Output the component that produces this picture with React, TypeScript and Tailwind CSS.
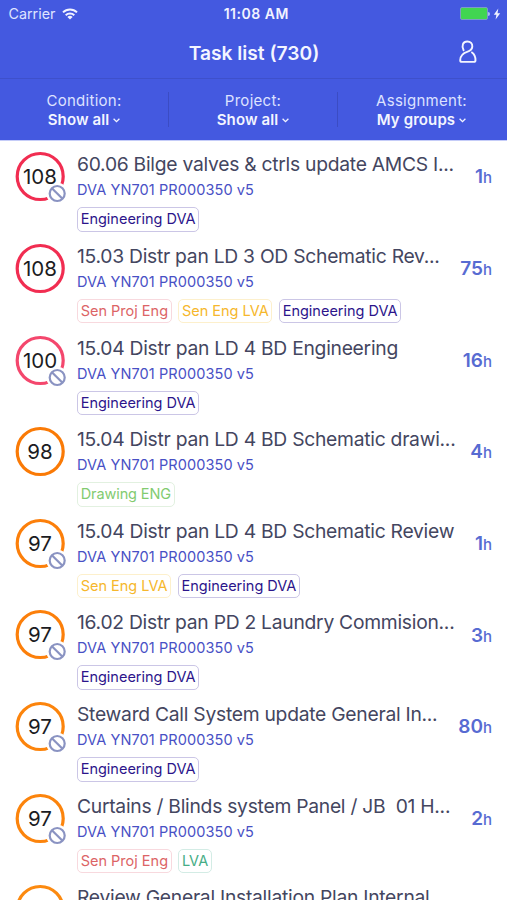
type Tag = 'proj' | 'lva' | 'dva' | 'draw' | 'teal';

const TAGS: Record<Tag, { label: string; cls: string }> = {
  dva: { label: 'Engineering DVA', cls: 'text-[#2c158b] border-[#cbc6e6]' },
  proj: { label: 'Sen Proj Eng', cls: 'text-[#dc6466] border-[#f8d9de]' },
  lva: { label: 'Sen Eng LVA', cls: 'text-[#f6b72c] border-[#fdf0cc]' },
  draw: { label: 'Drawing ENG', cls: 'text-[#82cb70] border-[#e2f1e0] tracking-[-0.1px]' },
  teal: { label: 'LVA', cls: 'text-[#46ad86] border-[#d3ece5]' },
};

type Task = {
  score: number;
  color: string;
  blocked?: boolean;
  title: string;
  hours: string;
  tags: Tag[];
};

const TASKS: Task[] = [
  { score: 108, color: '#f12d51', blocked: true, title: '60.06 Bilge valves & ctrls update AMCS I...', hours: '1', tags: ['dva'] },
  { score: 108, color: '#f12d51', title: '15.03 Distr pan LD 3 OD Schematic Rev...', hours: '75', tags: ['proj', 'lva', 'dva'] },
  { score: 100, color: '#f4476d', blocked: true, title: '15.04 Distr pan LD 4 BD Engineering', hours: '16', tags: ['dva'] },
  { score: 98, color: '#fa7a06', title: '15.04 Distr pan LD 4 BD Schematic drawi...', hours: '4', tags: ['draw'] },
  { score: 97, color: '#fc7f0a', blocked: true, title: '15.04 Distr pan LD 4 BD Schematic Review', hours: '1', tags: ['lva', 'dva'] },
  { score: 97, color: '#fc7f0a', blocked: true, title: '16.02 Distr pan PD 2 Laundry Commision...', hours: '3', tags: ['dva'] },
  { score: 97, color: '#fc840c', blocked: true, title: 'Steward Call System update General In...', hours: '80', tags: ['dva'] },
  { score: 97, color: '#fc840c', blocked: true, title: 'Curtains / Blinds system Panel / JB  01 H...', hours: '2', tags: ['proj', 'teal'] },
  { score: 97, color: '#fc8a10', title: 'Review General Installation Plan Internal', hours: '', tags: [] },
];

const FILTERS = [
  { label: 'Condition:', value: 'Show all' },
  { label: 'Project:', value: 'Show all' },
  { label: 'Assignment:', value: 'My groups' },
];

function StatusBar() {
  return (
    <div className="grid h-[27px] grid-cols-3 items-center pl-[8.5px] pr-[6px] text-[#f1f3ff]">
      <div className="flex items-center gap-[6.5px]">
        <span className="text-[14.3px] leading-[27px] text-[#dfe4ff]">Carrier</span>
        <svg width="16" height="12" viewBox="0 0 16 12" fill="none" stroke="currentColor" strokeWidth="2">
          <path d="M1 4.4a10 10 0 0 1 14 0" />
          <path d="M3.7 7.2a6.2 6.2 0 0 1 8.6 0" />
          <path d="M8 11.6 5.4 9a3.8 3.8 0 0 1 5.2 0z" fill="currentColor" stroke="none" />
        </svg>
      </div>
      <div className="pl-[3px] text-center text-[14px] font-semibold leading-[27px] tracking-[0.5px]">11:08 AM</div>
      <div className="flex items-center justify-end">
        <div className="h-[13px] w-[28px] rounded-[2px] border border-[#7d9ac9] bg-[#41d551]" />
        <div className="h-[4px] w-[2px] rounded-r bg-[#a9bdf0]" />
        <svg className="ml-[3px]" width="8" height="12" viewBox="0 0 8 12" fill="currentColor">
          <path d="M5.3 0.5 0.8 6.7h2.6L2.6 11.5 7.2 5.2H4.5z" />
        </svg>
      </div>
    </div>
  );
}

function Header() {
  return (
    <header className="h-[141px] border-b border-[#c5ccf8] bg-[#4459e0] text-[#f3f5ff]">
      <StatusBar />
      <div className="grid h-[52px] grid-cols-[60px_1fr_60px] items-center border-b border-[#3e50cb]">
        <span />
        <h1 className="pl-px text-center text-[19.2px] font-semibold leading-[50px]">Task list (730)</h1>
        <svg className="-mt-[2px] ml-[10px]" width="20" height="26" viewBox="0 0 20 26" fill="none" stroke="currentColor" strokeWidth="1.9" strokeLinejoin="round" strokeLinecap="round">
          <path d="M6.6 11.2C4.3 6.800 5.900 2.500 10.300 2.500c3.300 0 5.200 2.200 5 5.100-.2 2.700-1.900 4.100-4.600 5-4.600 1.500-7.500 3.700-7.500 8.600 0 1.200.5 1.700 1.600 1.700h12c1.100 0 1.700-.5 1.700-1.700 0-3.600-1-6-3.500-7.800" />
        </svg>
      </div>
      <div className="grid grid-cols-3 pt-[13px]">
        {FILTERS.map((f, i) => (
          <div key={f.label} className={`flex h-[35px] flex-col items-center border-[#3b4cc4] ${i < 2 ? 'border-r' : 'pr-[2px]'}`}>
            <span className="text-[15px] leading-[18px] tracking-[0.27px] text-[#dde2ff]">{f.label}</span>
            <span className="flex items-center gap-[4px] text-[15px] font-semibold leading-[20px] tracking-[0.1px]">
              {f.value}
              <svg width="7" height="5" viewBox="0 0 7 5" fill="none" stroke="currentColor" strokeWidth="1.3">
                <path d="M.6.8 3.5 3.7 6.4.8" />
              </svg>
            </span>
          </div>
        ))}
      </div>
    </header>
  );
}

function Score({ task }: { task: Task }) {
  return (
    <div className="relative mt-[10.2px] h-[50px] w-[52px] shrink-0">
      <svg className="absolute inset-0" width="52" height="53" viewBox="0 0 52 53" fill="none">
        <circle cx="25.2" cy="25.5" r="23" stroke={task.color} strokeWidth="3.2" />
        {task.blocked && (
          <>
            <circle cx="42.2" cy="42.5" r="10.8" fill="#fff" />
            <circle cx="42.2" cy="42.5" r="7.5" stroke="#8a93c2" strokeWidth="2.2" />
            <path d="m36.900 37.200 10.600 10.600" stroke="#8a93c2" strokeWidth="2.2" />
          </>
        )}
      </svg>
      <span className="relative block w-[50px] text-center text-[20.5px] leading-[52px] text-[#1b1b22]">{task.score}</span>
    </div>
  );
}

function Row({ task }: { task: Task }) {
  return (
    <li className="flex h-[91.67px] pl-[15px] pr-[15px]">
      <Score task={task} />
      <div className="ml-[10px] min-w-0 flex-1 pt-[10.2px]">
        <div className="w-max whitespace-pre text-[19.3px] leading-[26px] tracking-[-0.27px] text-[#44465f]">{task.title}</div>
        <div className="w-max whitespace-pre text-[14.5px] leading-[26px] tracking-[0.1px] text-[#4850c5]">DVA YN701 PR000350 v5</div>
        <div className="mt-[4px] flex gap-[6.5px]">
          {task.tags.map((t) => (
            <span key={t} className={`h-[24.5px] whitespace-nowrap rounded-[5px] border px-[2.7px] text-[14.5px] leading-[22.5px] ${TAGS[t].cls}`}>
              {TAGS[t].label}
            </span>
          ))}
        </div>
      </div>
      {task.hours && (
        <div className="pt-[23.3px] text-[19px] font-semibold leading-[26px] text-[#576bd2]">
          {task.hours}
          <span className="text-[15px] font-medium">h</span>
        </div>
      )}
    </li>
  );
}

export default function App() {
  return (
    <div className="h-[900px] w-[507px] overflow-hidden bg-white font-['Inter',sans-serif]">
      <Header />
      <ul>
        {TASKS.map((t, i) => (
          <Row key={i} task={t} />
        ))}
      </ul>
    </div>
  );
}
